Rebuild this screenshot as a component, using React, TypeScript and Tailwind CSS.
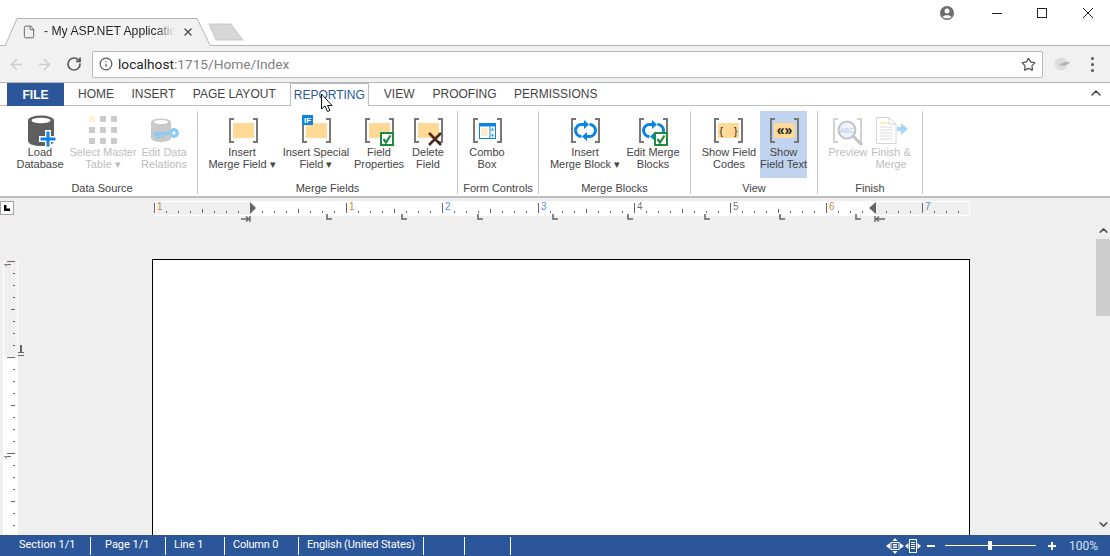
import React from "react";
import { Info, Star, RotateCw, ArrowLeft, ArrowRight, X, File, ChevronUp, ChevronDown } from "lucide-react";

const font = "font-['Liberation_Sans',Arial,sans-serif]";

const Brackets = ({ color = "#777" }: { color?: string }) => (
  <g fill="none" stroke={color} strokeWidth="2">
    <path d="M5 1H1V24H5" />
    <path d="M24 1H28V24H24" />
  </g>
);

const Field = () => (
  <svg width="30" height="26" viewBox="0 0 30 26">
    <Brackets />
    <rect x="4" y="5" width="21" height="15" fill="#ffd995" />
  </svg>
);

const FieldIf = () => (
  <svg width="30" height="30" viewBox="0 0 30 30">
    <g transform="translate(0 3)">
      <Brackets />
      <rect x="4" y="5" width="21" height="15" fill="#ffd995" />
    </g>
    <rect x="0" y="0" width="11" height="10" fill="#0a84e0" />
    <text x="2" y="8" fontSize="8" fontWeight="bold" fill="#fff" fontFamily="Liberation Sans">IF</text>
  </svg>
);

const Check = ({ x, y }: { x: number; y: number }) => (
  <g transform={`translate(${x} ${y})`}>
    <rect x="0" y="0" width="12" height="12" fill="#fff" stroke="#1e8a3c" strokeWidth="2" />
    <path d="M2.5 6L5 9.5L9.5 2.5" fill="none" stroke="#1e8a3c" strokeWidth="2.2" />
  </g>
);

const FieldCheck = () => (
  <svg width="32" height="30" viewBox="0 0 32 30">
    <Brackets />
    <rect x="4" y="5" width="21" height="15" fill="#ffd995" />
    <Check x={16} y={15} />
  </svg>
);

const FieldDelete = () => (
  <svg width="32" height="30" viewBox="0 0 32 30">
    <Brackets />
    <rect x="4" y="5" width="21" height="15" fill="#ffd995" />
    <path d="M15 15L27 27M27 15L15 27" stroke="#4b2a1c" strokeWidth="2.6" />
  </svg>
);

const Combo = () => (
  <svg width="30" height="26" viewBox="0 0 30 26">
    <Brackets />
    <rect x="6.5" y="5.5" width="16" height="15" fill="#fff" stroke="#0a84e0" />
    <rect x="6.5" y="5.5" width="16" height="3" fill="#0a84e0" />
    <path d="M8 11H15M8 13H15M8 15H15M8 17H15" stroke="#ffd995" />
    <path d="M17 9V20" stroke="#0a84e0" />
    <path d="M19.5 10L21 12.5H18ZM19.5 19L21 16.5H18Z" fill="#0a84e0" />
  </svg>
);

const Cycle = () => (
  <g>
    <g fill="none" stroke="#0a84e0" strokeWidth="3">
      <path d="M14 6.5H10.5A6 6 0 0 0 10.5 18.5" />
      <path d="M15 18.5H18.5A6 6 0 0 0 18.5 6.5" />
    </g>
    <path d="M13 2V11L18 6.5ZM16 14V23L11 18.5Z" fill="#0a84e0" />
  </g>
);

const MergeBlock = () => (
  <svg width="30" height="26" viewBox="0 0 30 26">
    <Brackets />
    <Cycle />
  </svg>
);

const MergeEdit = () => (
  <svg width="32" height="30" viewBox="0 0 32 30">
    <Brackets />
    <Cycle />
    <Check x={16} y={15} />
  </svg>
);

const FieldText = ({ label, bold }: { label: string; bold?: boolean }) => (
  <svg width="30" height="26" viewBox="0 0 30 26">
    <Brackets />
    <rect x="4" y="5" width="21" height="15" fill="#ffd995" />
    <text
      x="14.5"
      y="16.5"
      fontSize={bold ? "14" : "10"}
      textAnchor="middle"
      fontWeight={bold ? "bold" : "normal"}
      fill="#222"
      fontFamily="Liberation Sans"
    >
      {label}
    </text>
  </svg>
);

const Database = () => (
  <svg width="30" height="32" viewBox="0 0 30 32">
    <path d="M1 6V26C1 29 7 31 14 31C21 31 27 29 27 26V6Z" fill="#5f5f5f" />
    <ellipse cx="14" cy="5.5" rx="13" ry="5" fill="#5f5f5f" />
    <ellipse cx="14" cy="5.5" rx="9.5" ry="2.7" fill="#fff" />
    <path d="M18 15H24V21H30V27H24V33H18V27H12V21H18Z" fill="#fff" />
    <path d="M19.5 16.5H22.5V22.5H28.5V25.5H22.5V31.5H19.5V25.5H13.5V22.5H19.5Z" fill="#0a84e0" />
  </svg>
);

const GridIcon = () => (
  <svg width="28" height="28" viewBox="0 0 28 28">
    {[0, 11, 22].map((y) =>
      [0, 11, 22].map((x) => (
        <rect key={`${x}-${y}`} x={x} y={y} width="6" height="6" fill={x === 0 && y === 0 ? "#fcf5d3" : "#cbcbcb"} />
      ))
    )}
  </svg>
);

const Relations = () => (
  <svg width="30" height="26" viewBox="0 0 30 26">
    <path d="M1 4V20C1 22 5 24 11 24C17 24 21 22 21 20V4Z" fill="#c9c9c9" />
    <ellipse cx="11" cy="4" rx="10" ry="3.5" fill="#c9c9c9" />
    <ellipse cx="11" cy="4" rx="7" ry="2" fill="#fff" />
    <rect x="4" y="14" width="18" height="3" fill="#8ecbf3" />
    <path d="M6 17V20M9 17V21M12 17V20" stroke="#8ecbf3" strokeWidth="2" />
    <circle cx="24" cy="15" r="5" fill="#8ecbf3" />
    <circle cx="24" cy="15" r="1.6" fill="#fff" />
  </svg>
);

const Preview = () => (
  <svg width="32" height="30" viewBox="0 0 32 30">
    <Brackets color="#d2d2d2" />
    <circle cx="14" cy="12" r="8.5" fill="#eef3fa" stroke="#c4c4c4" strokeWidth="2" />
    <text x="14" y="15" fontSize="7" textAnchor="middle" fill="#b9cbe6" fontFamily="Liberation Sans">ABC</text>
    <path d="M20 18L29 27" stroke="#c4c4c4" strokeWidth="3" />
  </svg>
);

const FinishIcon = () => (
  <svg width="36" height="30" viewBox="0 0 36 30">
    <path d="M1.5 1.5H14L21 8V27.5H1.5Z" fill="#fff" stroke="#d4d4d4" />
    <path d="M14 1.5V8H21" fill="none" stroke="#d4d4d4" />
    <path d="M5 7H12" stroke="#fbe7bd" strokeWidth="2" />
    <path d="M5 11H18M5 14H18M5 17H18M5 20H18M5 23H18" stroke="#dcdcdc" />
    <path d="M22 11H26V7L33 13L26 19V15H22Z" fill="#a6d6f7" />
  </svg>
);

type Btn = { w: number; icon: React.ReactNode; lines: string[]; off?: boolean; on?: boolean; nudge?: string };

const RibbonButton = ({ w, icon, lines, off, on, nudge }: Btn) => (
  <div
    style={{ width: w }}
    className={`flex h-[67px] shrink-0 flex-col items-center ${on ? "bg-[#c0d4f0]" : ""} ${off ? "text-[#bdbdbd]" : "text-[#444]"}`}
  >
    <div className="flex h-[35px] w-full items-start justify-center pt-[4px]">
      <div className={nudge}>{icon}</div>
    </div>
    {lines.map((l) => (
      <div key={l} className="h-[12px] whitespace-nowrap text-[11px] leading-[12px]">
        {l}
      </div>
    ))}
  </div>
);

const groups: { label: string; w: number; pl: number; buttons: Btn[] }[] = [
  {
    label: "Data Source",
    w: 191,
    pl: 2,
    buttons: [
      { w: 62, icon: <Database />, lines: ["Load", "Database"], nudge: "ml-[3px]" },
      { w: 64, icon: <GridIcon />, lines: ["Select Master", "Table ▾"], off: true, nudge: "mt-[1px]" },
      { w: 58, icon: <Relations />, lines: ["Edit Data", "Relations"], off: true, nudge: "ml-[1px] mt-[3px]" },
    ],
  },
  {
    label: "Merge Fields",
    w: 260,
    pl: 6,
    buttons: [
      { w: 76, icon: <Field />, lines: ["Insert", "Merge Field ▾"], nudge: "ml-[3px] mt-[3px]" },
      { w: 72, icon: <FieldIf />, lines: ["Insert Special", "Field ▾"], nudge: "ml-[2px]" },
      { w: 54, icon: <FieldCheck />, lines: ["Field", "Properties"], nudge: "ml-[3px] mt-[3px]" },
      { w: 44, icon: <FieldDelete />, lines: ["Delete", "Field"], nudge: "ml-[3px] mt-[3px]" },
    ],
  },
  {
    label: "Form Controls",
    w: 81,
    pl: 6,
    buttons: [{ w: 46, icon: <Combo />, lines: ["Combo", "Box"], nudge: "ml-[2px] mt-[3px]" }],
  },
  {
    label: "Merge Blocks",
    w: 152,
    pl: 7,
    buttons: [
      { w: 78, icon: <MergeBlock />, lines: ["Insert", "Merge Block ▾"], nudge: "ml-[2px] mt-[3px]" },
      { w: 58, icon: <MergeEdit />, lines: ["Edit Merge", "Blocks"], nudge: "ml-[3px] mt-[3px]" },
    ],
  },
  {
    label: "View",
    w: 127,
    pl: 7,
    buttons: [
      { w: 62, icon: <FieldText label={"{\u00a0\u00a0\u00a0\u00a0}"} />, lines: ["Show Field", "Codes"], nudge: "mt-[3px]" },
      { w: 47, icon: <FieldText label="«»" bold />, lines: ["Show", "Field Text"], on: true, nudge: "ml-[2px] mt-[3px]" },
    ],
  },
  {
    label: "Finish",
    w: 105,
    pl: 9,
    buttons: [
      { w: 42, icon: <Preview />, lines: ["Preview"], off: true, nudge: "ml-[2px] mt-[3px]" },
      { w: 44, icon: <FinishIcon />, lines: ["Finish &", "Merge"], off: true, nudge: "ml-[4px] mt-[1px]" },
    ],
  },
];

const tabs = ["HOME", "INSERT", "PAGE LAYOUT", "REPORTING", "VIEW", "PROOFING", "PERMISSIONS"];

const HRuler = () => {
  const ticks = Array.from({ length: 68 }, (_, i) => i).filter((i) => i > 0);
  const nums = [
    { x: 3, n: "1", c: "#c98a3a" },
    { x: 195, n: "1", c: "#c98a3a" },
    { x: 291, n: "2", c: "#4f8fc9" },
    { x: 387, n: "3", c: "#4f8fc9" },
    { x: 483, n: "4", c: "#777" },
    { x: 579, n: "5", c: "#777" },
    { x: 675, n: "6", c: "#c98a3a" },
    { x: 771, n: "7", c: "#4f8fc9" },
  ];
  return (
    <svg width="824" height="24" viewBox="0 0 824 24">
      <rect x="1.5" y="1.5" width="95" height="14" fill="#efefef" stroke="#fff" />
      <rect x="97" y="1" width="624" height="15" fill="#fff" />
      <rect x="721.5" y="1.5" width="94" height="14" fill="#efefef" stroke="#fff" />
      {ticks.map((i) => {
        const x = 0.5 + i * 12;
        if (i % 8 === 0) return <path key={i} d={`M${x} 3V13`} stroke="#666" />;
        if (i % 4 === 0) return <path key={i} d={`M${x} 9V13`} stroke="#666" />;
        return <path key={i} d={`M${x} 11V13`} stroke="#666" />;
      })}
      <path d="M0.5 3V13" stroke="#666" />
      {nums.map((d) => (
        <text key={d.x} x={d.x} y="10" fontSize="10" fill={d.c} fontFamily="Liberation Sans">
          {d.n}
        </text>
      ))}
      <path d="M96 2L102 8L96 14Z" fill="#666" />
      <path d="M722 2L715 8L722 14Z" fill="#666" />
      {[173, 248, 324, 399, 474, 551, 626, 702].map((x) => (
        <path key={x} d={`M${x} 14V19H${x + 5}`} fill="none" stroke="#666" strokeWidth="1.6" />
      ))}
      <path d="M87 19H96M96 16V22M92 16.5L95 19L92 21.5" fill="none" stroke="#666" strokeWidth="1.4" />
      <path d="M731 19H721M721 16V22M725 16.5L722 19L725 21.5" fill="none" stroke="#666" strokeWidth="1.4" />
    </svg>
  );
};

const VRuler = () => {
  const ticks = Array.from({ length: 24 }, (_, i) => i);
  return (
    <svg width="24" height="280" viewBox="0 0 24 280" className="shrink-0">
      <rect x="3.5" y="1.5" width="14" height="95" fill="#efefef" stroke="#fff" />
      <rect x="3" y="96" width="15" height="184" fill="#fff" />
      {ticks.map((i) => {
        const y = 1.5 + i * 12;
        if (i % 8 === 0) return <path key={i} d={`M7 ${y}H15`} stroke="#666" />;
        if (i % 4 === 0) return <path key={i} d={`M11 ${y}H15`} stroke="#666" />;
        return <path key={i} d={`M13 ${y}H15`} stroke="#666" />;
      })}
      <path d="M4 4.5H11" stroke="#666" />
      <path d="M4 4.5H7" stroke="#c66" />
      <path d="M5 5.5H7" stroke="#aaa" strokeWidth="2" />
      <path d="M4 196.5H11" stroke="#666" />
      <path d="M4 196.5H7" stroke="#c66" />
      <path d="M5 197.5H7" stroke="#aaa" strokeWidth="2" />
      <path d="M21 85V93" stroke="#666" strokeWidth="2" />
      <path d="M18 95.5H24M18 92.5H24" stroke="#666" />
    </svg>
  );
};

const status = [
  { label: "Section 1/1", w: 91, pl: 19, cls: "" },
  { label: "Page 1/1", w: 75, pl: 14, cls: "" },
  { label: "Line 1", w: 59, pl: 8, cls: "" },
  { label: "Column 0", w: 74, pl: 8, cls: "tracking-[-0.2px]" },
  { label: "English (United States)", w: 125, pl: 8, cls: "tracking-[-0.15px]" },
  { label: "", w: 41, pl: 0, cls: "" },
  { label: "", w: 46, pl: 0, cls: "" },
];

export default function App() {
  return (
    <div className={`flex h-[556px] w-[1110px] flex-col overflow-hidden bg-white ${font}`}>
      {/* browser title strip */}
      <div className="flex h-[45px] shrink-0 items-start">
        <div className="relative z-10 ml-[5px] mt-[18px] flex h-[27px] w-[205px] items-center">
          <svg width="206" height="28" viewBox="0 0 206 28" className="absolute left-0 top-0">
            <path d="M0 28L12 0.5H192L205.5 28" fill="#f1f1f1" stroke="#b5b5b5" />
          </svg>
          <File size={14} strokeWidth={1.5} className="relative ml-[17px] text-[#555]" />
          <span className="relative ml-[8px] w-[131px] overflow-hidden whitespace-nowrap bg-gradient-to-r from-[#222] from-85% to-[#f1f1f1] bg-clip-text text-[12.2px] text-transparent">
            - My ASP.NET Application
          </span>
          <X size={12} strokeWidth={3} className="relative ml-[7px] text-[#555]" />
        </div>
        <svg width="36" height="20" viewBox="0 0 36 20" className="ml-[-2px] mt-[23px]">
          <path d="M1 1H23L35 17H8Z" fill="#d6d6d6" stroke="#c8c8c8" />
        </svg>
        <div className="ml-auto flex pt-[5px]">
          <svg width="16" height="16" viewBox="0 0 16 16" className="mr-[36px]">
            <circle cx="8" cy="8" r="7" fill="#6d6d6d" />
            <circle cx="8" cy="6" r="2.5" fill="#fff" />
            <path d="M3.5 12C5 9.5 11 9.5 12.5 12C10.5 13.8 5.5 13.8 3.5 12Z" fill="#fff" />
          </svg>
          <svg width="12" height="16" viewBox="0 0 12 16" className="mr-[33px]">
            <path d="M1 8.5H11" stroke="#222" />
          </svg>
          <svg width="12" height="16" viewBox="0 0 12 16" className="mr-[34px]">
            <rect x="1.5" y="3.5" width="9" height="9" fill="none" stroke="#222" />
          </svg>
          <svg width="12" height="16" viewBox="0 0 12 16" className="mr-[16px]">
            <path d="M1 3L11 13M11 3L1 13" stroke="#222" />
          </svg>
        </div>
      </div>

      {/* browser toolbar */}
      <div className="flex h-[38px] shrink-0 items-center border-y border-[#b5b5b5] bg-[#f1f1f1]">
        <ArrowLeft size={17} strokeWidth={2.2} className="ml-[8px] text-[#cfcfcf]" />
        <ArrowRight size={17} strokeWidth={2.2} className="ml-[11px] text-[#cfcfcf]" />
        <RotateCw size={16} strokeWidth={2.6} className="ml-[13px] text-[#5a5a5a]" />
        <div className="ml-[10px] flex h-[27px] w-[951px] items-center rounded-[2px] border border-[#b9b9b9] bg-white">
          <Info size={14} strokeWidth={2} className="ml-[6px] text-[#555]" />
          <span className="ml-[5px] font-['Roboto',sans-serif] text-[13.7px] text-[#222]">
            localhost<span className="text-[#808080]">:1715/Home/Index</span>
          </span>
          <Star size={15} strokeWidth={2} className="ml-auto mr-[6px] text-[#555]" />
        </div>
        <svg width="18" height="14" viewBox="0 0 18 14" className="ml-[10px]">
          <circle cx="8" cy="7" r="6.5" fill="#dcdcdc" />
          <path d="M6 8C9 6 13 4 17 5C15 8 11 10 6 8Z" fill="#b4b4b4" />
        </svg>
        <div className="ml-[20px] flex flex-col gap-[3px]">
          <span className="h-[3px] w-[3px] rounded-full bg-[#555]" />
          <span className="h-[3px] w-[3px] rounded-full bg-[#555]" />
          <span className="h-[3px] w-[3px] rounded-full bg-[#555]" />
        </div>
      </div>

      {/* ribbon tabs */}
      <div className="relative flex h-[23px] shrink-0 border-b border-[#bdbdbd] pl-[7px] text-[12px] text-[#444]">
        <div className="flex h-[23px] w-[57px] items-center justify-center bg-[#2b579a] font-bold text-white">FILE</div>
        <div className="ml-[14px] flex gap-[17.5px]">
          {tabs.map((t) =>
            t === "REPORTING" ? (
              <div
                key={t}
                className="z-10 -ml-[3.5px] -mr-[2.5px] flex h-[23px] items-center border-x border-t border-[#bdbdbd] bg-white px-[3px] text-[#2b579a]"
              >
                {t}
              </div>
            ) : (
              <div key={t} className={`flex h-[22px] items-center ${t === "PROOFING" ? "ml-[0.5px]" : ""}`}>
                {t}
              </div>
            )
          )}
        </div>
        <ChevronUp size={16} strokeWidth={2.2} className="absolute right-[6px] top-[2px] text-[#444]" />
        {/* mouse pointer */}
        <svg width="14" height="20" viewBox="0 0 14 20" className="absolute left-[320px] top-[10px] z-20">
          <path d="M1.5 1V16L5 13L7.5 18.5L10 17.5L7.5 12.5H12Z" fill="#fff" stroke="#111" />
        </svg>
      </div>

      {/* ribbon body */}
      <div className="flex h-[92px] shrink-0 border-b-2 border-[#bdbdbd] pl-[7px] pt-[5px]">
        {groups.map((g) => (
          <div
            key={g.label}
            style={{ width: g.w }}
            className="flex h-[83px] shrink-0 flex-col border-r border-[#c6c6c6]"
          >
            <div style={{ paddingLeft: g.pl }} className="flex h-[71px]">
              {g.buttons.map((b) => (
                <RibbonButton key={b.lines.join(" ")} {...b} />
              ))}
            </div>
            <div className="text-center text-[11px] leading-[12px] text-[#444]">{g.label}</div>
          </div>
        ))}
      </div>

      {/* document area */}
      <div className="flex min-h-0 flex-1 bg-[#efefef]">
        <div className="flex min-w-0 flex-1 flex-col overflow-hidden">
          <div className="mt-[2px] flex shrink-0 items-start">
            <div className="mt-[1px] flex h-[14px] w-[14px] items-center justify-center border-[1.5px] border-[#a89fa8] bg-white">
              <svg width="6" height="6" viewBox="0 0 6 6">
                <path d="M0 0H2.5V3.5H6V6H0Z" fill="#000" />
              </svg>
            </div>
            <div className="ml-[140px]">
              <HRuler />
            </div>
          </div>
          <div className="mt-[35px] flex min-h-0 flex-1 items-start">
            <div className="mt-[1px]">
              <VRuler />
            </div>
            <div className="ml-[128px] h-[300px] w-[818px] shrink-0 border border-black bg-white" />
          </div>
        </div>
        <div className="flex w-[14px] shrink-0 flex-col items-center pt-[26px]">
          <ChevronUp size={13} strokeWidth={3} className="text-[#555]" />
          <div className="mt-[2px] h-[77px] w-full bg-[#cdcdcd]" />
          <ChevronDown size={13} strokeWidth={3} className="mt-auto mb-[4px] text-[#555]" />
        </div>
      </div>

      {/* status bar */}
      <div className="flex h-[21px] shrink-0 items-center bg-[#2b579a] font-['Roboto',sans-serif] text-[11px] text-white">
        {status.map((s, i) => (
          <div
            key={i}
            style={{ width: s.w, paddingLeft: s.pl }}
            className={`flex h-[18px] shrink-0 items-center whitespace-nowrap border-r border-white ${s.cls}`}
          >
            {s.label}
          </div>
        ))}
        <div className="ml-[375px] flex items-center">
          <svg width="18" height="16" viewBox="0 0 18 16">
            <rect x="5" y="4.5" width="8" height="7" fill="none" stroke="#fff" />
            <path d="M7 6.5H11M7 8H11M7 9.5H11" stroke="#fff" />
            <path d="M9 0L11.5 3H6.5ZM9 16L11.5 13H6.5ZM0 8L4 5V11ZM18 8L14 5V11Z" fill="#fff" />
          </svg>
          <svg width="16" height="16" viewBox="0 0 16 16" className="ml-[1px]">
            <rect x="4.5" y="1.5" width="7" height="13" fill="none" stroke="#fff" />
            <path d="M6 4.5H10M6 6.5H10M6 8.5H10M6 10.5H10" stroke="#fff" />
            <path d="M0 8L3.5 5V11ZM16 8L12.5 5V11Z" fill="#fff" />
          </svg>
          <div className="ml-[6px] h-[2px] w-[8px] bg-white" />
          <div className="relative ml-[10px] h-[1px] w-[91px] bg-white">
            <div className="absolute left-[43px] top-[-4px] h-[9px] w-[4px] bg-white" />
          </div>
          <div className="relative ml-[12px] h-[2px] w-[8px] bg-white">
            <div className="absolute left-[3px] top-[-3px] h-[8px] w-[2px] bg-white" />
          </div>
          <span className="ml-[13px] text-[12px] text-[#d6e2f2]">100%</span>
        </div>
      </div>
    </div>
  );
}
